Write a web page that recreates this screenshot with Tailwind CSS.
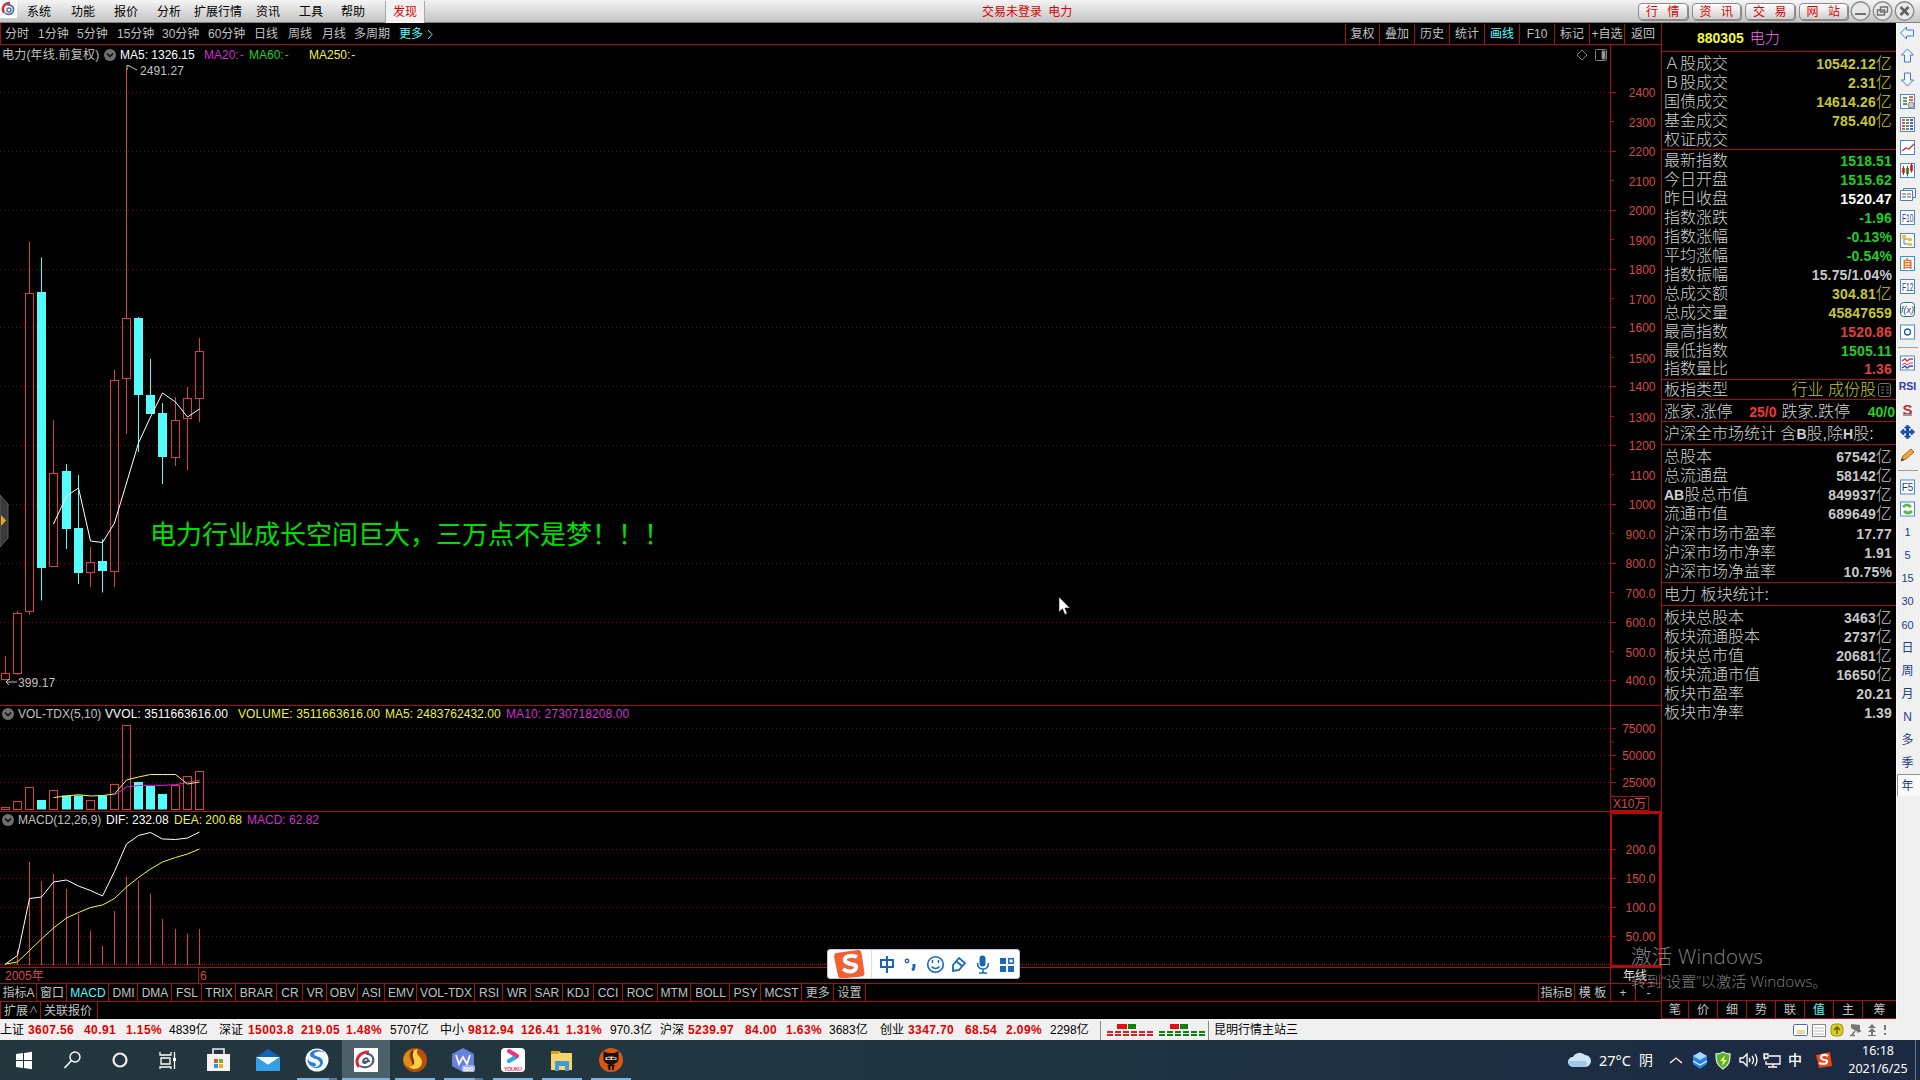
<!DOCTYPE html>
<html lang="zh-CN">
<head>
    <meta charset="UTF-8">
    <meta name="viewport" content="width=device-width, initial-scale=1.0">
    <title>电力 880305</title>
    <script src="https://cdn.jsdelivr.net/npm/@tailwindcss/browser@4"></script>
</head>
<body class="w-[1920px] h-[1080px] overflow-hidden bg-black font-['Liberation_Sans','Noto_Sans_CJK_SC',sans-serif] text-[12px] leading-none text-[#c0c0c0] whitespace-nowrap">
<div class="relative flex flex-col w-[1920px] h-[1080px]">

    <!-- Menu bar -->
    <header class="flex h-[23px] shrink-0 bg-linear-to-b from-[#f4f4f4] to-[#c4c4c4] border-b border-[#808080] text-black">
        <svg class="w-[17px] h-[18px] bg-white" viewBox="0 0 17 18" fill="none">
            <path d="M4 13C1 8 4 3 10 3" stroke="#d8303a" stroke-width="2.4"/>
            <path d="M7 5c5-1 8 3 6 7-2 3-6 3-8 1" stroke="#5a6ea8" stroke-width="1.6"/>
            <circle cx="9" cy="10" r="2" stroke="#5a6ea8" stroke-width="1.4"/>
        </svg>
        <nav class="flex items-center h-[22px] pl-[10px] pt-[1px]">
            <span class="w-[44px]">系统</span>
            <span class="w-[43px]">功能</span>
            <span class="w-[43px]">报价</span>
            <span class="w-[37px]">分析</span>
            <span class="w-[62px]">扩展行情</span>
            <span class="w-[43px]">资讯</span>
            <span class="w-[42px]">工具</span>
            <span class="w-[44px]">帮助</span>
            <span class="flex items-center justify-center w-[40px] h-[22px] bg-[#f2f2f2] border-x border-[#a8a8a8] text-[#e00000]">发现</span>
        </nav>
        <div class="flex items-center pl-[557px] w-[1213px] h-[22px] pt-[1px] text-[#e00000] [word-spacing:3px]">交易未登录 电力</div>
        <div id="siteButtons" class="flex gap-[4px] pt-[3px]"></div>
        <svg class="w-[70px] h-[22px]" viewBox="1849 0 70 22" fill="#e8e8e8" stroke="#8a8a8a" stroke-width="1.4">
            <circle cx="1861.500" cy="11" r="9.3"/><circle cx="1883.500" cy="11" r="9.3"/><circle cx="1905.500" cy="11" r="9.3"/>
            <path d="M1856 14h11" stroke="#707070" stroke-width="2"/>
            <path d="M1881.500 7h7v5h-7zM1878.500 10h7v5h-7z" stroke="#707070"/>
            <path d="M1901.500 7l8 8M1909.500 7l-8 8" stroke="#606060" stroke-width="2.6"/>
        </svg>
    </header>

    <div class="flex h-[996px] shrink-0">
        <!-- Left: charts -->
        <div class="flex flex-col w-[1662px] border-r border-[#a80f14]">
            <!-- Period bar -->
            <div class="flex items-center h-[22px] shrink-0 border-b border-l border-[#a80f14] pl-[4px] pt-[1px]">
                <span class="w-[33px]">分时</span>
                <span class="w-[39px]">1分钟</span>
                <span class="w-[40px]">5分钟</span>
                <span class="w-[45px]">15分钟</span>
                <span class="w-[46px]">30分钟</span>
                <span class="w-[46px]">60分钟</span>
                <span class="w-[34px]">日线</span>
                <span class="w-[34px]">周线</span>
                <span class="w-[32px]">月线</span>
                <span class="w-[45px]">多周期</span>
                <span class="w-[28px] text-[#54fcfc]">更多</span>
                <svg class="w-[8px] h-[11px]" viewBox="0 0 8 11" fill="none" stroke="#54fcfc"><path d="M1 1l4 4.5L1 10"/></svg>
                <div id="chartTools" class="flex ml-auto h-full"></div>
            </div>

            <!-- Price panel -->
            <div class="flex h-[20px] shrink-0">
                <div class="flex items-center w-[1611px] border-r border-[#a80f14] pl-[2px] pb-[1px]">
                    <span class="w-[102px] tracking-[0.2px]">电力(年线.前复权)</span>
                    <svg class="w-[12px] h-[12px] mr-[4px]" viewBox="0 0 12 12"><circle cx="6" cy="6" r="6" fill="#707070"/><path d="M3 4.5l3 3 3-3" fill="none" stroke="#111" stroke-width="1.6"/></svg>
                    <span class="w-[84px] text-white">MA5: 1326.15</span>
                    <span class="w-[45px] text-[#d030d0]">MA20:&#8202;-</span>
                    <span class="w-[60px] text-[#20d020]">MA60:&#8202;-</span>
                    <span class="w-[60px] text-[#f0f040]">MA250:&#8202;-</span>
                    <svg class="ml-auto mr-[2px] w-[32px] h-[14px]" viewBox="0 0 32 14" fill="none" stroke="#808080"><path d="M6 2l5 5-5 5-5-5z"/><rect x="19.500" y="1.500" width="11" height="11" rx="1"/><path d="M26 3h3v8h-3z" fill="#a0a0a0"/></svg>
                </div>
            </div>
            <svg id="priceChart" class="w-[1661px] h-[640px] shrink-0" viewBox="0 65 1661 640"></svg>

            <!-- Volume panel -->
            <div class="flex h-[17px] shrink-0 border-t border-[#a80f14]">
                <div class="flex items-center w-[1611px] border-r border-[#a80f14] pl-[2px]">
                    <svg class="w-[12px] h-[12px] mr-[4px]" viewBox="0 0 12 12"><circle cx="6" cy="6" r="6" fill="#707070"/><path d="M3 4.500l3 3 3-3" fill="none" stroke="#111" stroke-width="1.6"/></svg>
                    <span class="w-[87px]">VOL-TDX(5,10)</span>
                    <span class="w-[133px] text-white tracking-[0.1px]">VVOL: 3511663616.00</span>
                    <span class="w-[147px] text-[#f0f040] tracking-[0.1px]">VOLUME: 3511663616.00</span>
                    <span class="w-[121px] text-[#f0f040] tracking-[0.05px]">MA5: 2483762432.00</span>
                    <span class="text-[#d030d0] tracking-[0.1px]">MA10: 2730718208.00</span>
                </div>
            </div>
            <svg id="volumeChart" class="w-[1661px] h-[89px] shrink-0" viewBox="0 722 1661 89"></svg>

            <!-- MACD panel -->
            <div class="flex h-[17px] shrink-0 border-t border-[#a80f14]">
                <div class="flex items-center w-[1610px] pl-[2px]">
                    <svg class="w-[12px] h-[12px] mr-[4px]" viewBox="0 0 12 12"><circle cx="6" cy="6" r="6" fill="#707070"/><path d="M3 4.500l3 3 3-3" fill="none" stroke="#111" stroke-width="1.6"/></svg>
                    <span class="w-[88px]">MACD(12,26,9)</span>
                    <span class="w-[68px] text-white">DIF: 232.08</span>
                    <span class="w-[73px] text-[#f0f040]">DEA: 200.68</span>
                    <span class="text-[#d030d0]">MACD: 62.82</span>
                </div>
                <div class="w-[51px] border-x-2 border-t-2 border-[#b80808]"></div>
            </div>
            <svg id="macdChart" class="w-[1661px] h-[139px] shrink-0" viewBox="0 828 1661 139"></svg>

            <!-- Date axis -->
            <div class="flex h-[16px] shrink-0 border-t border-[#a80f14] text-[#d84848]">
                <div class="flex items-center w-[198px] pl-[5px]">2005年</div>
                <div class="flex items-center w-[1412px] border-l border-[#a80f14] pl-[1px]">6</div>
                <div class="flex items-center w-[51px] border-l border-[#a80f14] pl-[12px] text-[#e0e0e0]">年线</div>
            </div>
            <div id="indicatorTabs" class="flex h-[17px] shrink-0 border-y border-[#a80f14] box-content"></div>
            <div class="flex h-[18px] shrink-0 border-b border-[#c01018]">
                <span class="flex items-center w-[41px] pl-[3px] border-x border-[#a80f14]">扩展<i class="not-italic text-[9px] ml-[1px]">∧</i></span>
                <span class="flex items-center w-[57px] pl-[3px] border-r border-[#a80f14]">关联报价</span>
            </div>
        </div>

        <!-- Quote panel -->
        <aside class="flex flex-col w-[234px]">
            <div class="flex items-center gap-[6px] h-[29px] shrink-0 border-b border-[#a80f14] pl-[35px] pt-[1px] text-[14px] font-bold text-[#f8f830]">880305 <span class="text-[15px] font-light text-[#f070f0]">电力</span></div>
            <div id="quotes" class="flex flex-col h-[948px]"></div>
            <div id="quoteTabs" class="flex h-[19px] shrink-0 border-y border-[#a80f14]"></div>
        </aside>

        <!-- Shortcut strip -->
        <svg id="strip" class="w-[24px] h-[996px] bg-[#f0f0f0]" viewBox="1896 23 24 996" fill="none"></svg>
    </div>

    <!-- Index ticker -->
    <div class="flex items-center h-[21px] shrink-0 bg-[#f0f0f0] text-black">
        <div id="ticker" class="flex items-center w-[1100px] pt-[1px]"></div>
        <svg class="w-[114px] h-[21px]" viewBox="1100 1019 114 21" id="depth"></svg>
        <span class="w-[578px] pt-[1px]">昆明行情主站三</span>
        <svg class="w-[104px] h-[16px]" viewBox="0 0 104 16" fill="none">
            <rect x="1.500" y="2.500" width="14" height="11" rx="1" fill="#fff" stroke="#4a6ac8"/><path d="M5 9h8M5 11h8" stroke="#d8b020"/>
            <rect x="20.500" y="2.500" width="13" height="12" fill="#fff" stroke="#888"/><path d="M22 6h10M22 9h10M22 12h10" stroke="#bbb"/>
            <rect x="39" y="2" width="12" height="12" rx="4" fill="#d8d020" stroke="#a09818"/><path d="M45 12V5m-3 3l3-3 3 3" stroke="#605800" stroke-width="1.300"/>
            <path d="M59 2l9 1v7l-4-1-5-3z" fill="#777"/><path d="M58 13.500h5M60 13l3-4M65 10l4-1" stroke="#777" stroke-width="1.500"/>
            <path d="M80 2l4 4h-8zM80 6l4 4h-8zM79 10h2v4h-2zM76 13h8v1h-8z" fill="#777"/>
            <path d="M93 3v5M93 11v2" stroke="#777" stroke-width="2"/>
        </svg>
    </div>

    <!-- Windows taskbar -->
    <footer class="flex h-[40px] shrink-0 bg-linear-to-r from-[#24373f] via-[#213541] to-[#1b2942] text-white">
        <svg class="w-[1560px] h-[40px]" viewBox="0 1040 1560 40" fill="none">
            <path d="M16 1054l7-1v7h-7zM24 1053l8-1.200v8.200h-8zM16 1061h7v7l-7-1zM24 1061h8v8.200l-8-1.200z" fill="#fff"/>
            <circle cx="75" cy="1057" r="5" stroke="#fff" stroke-width="1.400"/><path d="M71.500 1060.500l-7 7.500" stroke="#fff" stroke-width="1.600"/>
            <circle cx="120" cy="1060" r="6.500" stroke="#f0f0f0" stroke-width="2.200"/>
            <path d="M160 1052v3h11v-3M161 1058h9v6h-9zM160 1069v-2h11v2M174.500 1052v17" stroke="#fff" stroke-width="1.300"/><rect x="173" y="1058" width="3" height="3" fill="#fff"/>
            <path d="M213 1054v-5h11v5" stroke="#eee" stroke-width="1.600"/><path d="M207 1054h23v17h-23z" fill="#f4f4f4"/>
            <path d="M214 1059h4v4h-4z" fill="#e8502a"/><path d="M219 1059h4v4h-4z" fill="#78b020"/><path d="M214 1064h4v4h-4z" fill="#20a0e8"/><path d="M219 1064h4v4h-4z" fill="#f0b020"/>
            <path d="M256 1057l12-8 12 8v14h-24z" fill="#1464b8"/><path d="M256 1057h24l-12 8z" fill="#f4f8fc"/><path d="M256 1057v14h24v-14l-12 8z" fill="#30a0e8"/>
            <circle cx="317" cy="1060" r="11.500" fill="#f4f8ff"/>
            <path d="M325 1053c-5-5-15-3-15 2 0 4 10 3 10 8 0 3-4 5-8 4 5 3 11 0 11-5 0-6-9-5-9-8 0-2 6-4 11-1z" fill="#2f7fd0"/><path d="M308 1058c0 6 8 3 8 7 0 2-3 2-5 1-3-2-4-5-3-8z" fill="#2f7fd0"/>
            <rect x="342" y="1040" width="48" height="40" fill="#4c606c"/><rect x="354" y="1048" width="24" height="24" fill="#fff"/>
            <path d="M359 1067c-5-7 0-15 10-15" stroke="#d82838" stroke-width="3"/><path d="M366 1054c7-1 9 6 6 10-3 4-9 4-12 2" stroke="#505878" stroke-width="2"/><path d="M363 1062c0-4 5-5 5-2s-5 4-5 2l7-1" stroke="#505878" stroke-width="1.800"/>
            <circle cx="415" cy="1060" r="12" fill="#b8500c"/><path d="M418 1049c-12 2-4 11-4 14s-4 4-7 2c5 7 15 4 15-3 0-6-8-7-4-13z" fill="#ffd040"/><path d="M412 1049c-9 3-11 12-6 17 3 2 7 0 6-3-2-4-5-8 0-14z" fill="#d89018"/><path d="M413 1051c-4 6 2 9 0 13" stroke="#702808" stroke-width="1.800"/>
            <path d="M463 1048l11 6v12l-11 6-11-6v-12z" fill="#6880e0"/><path d="M456 1055l3 9 4-7 4 7 3-9" stroke="#fff" stroke-width="1.800"/><rect x="462" y="1065" width="13" height="7" rx="2" fill="#a0b0f0"/><text x="463" y="1071" font-size="6" font-weight="700" fill="#fff">800</text>
            <rect x="501" y="1048" width="24" height="24" rx="4" fill="#fff"/><path d="M509 1051l8 5-3 2" stroke="#f03080" stroke-width="4" stroke-linejoin="round" stroke-linecap="round"/><path d="M514 1058l-5 3" stroke="#20a8f0" stroke-width="4" stroke-linecap="round"/><text x="504" y="1070.500" font-size="5.500" font-weight="700" textLength="18" fill="#f03070">YOUKU</text>
            <path d="M551 1051h8l2 2h11v17h-21z" fill="#f8d468"/><path d="M551 1051h8v3h-8z" fill="#d8a020"/><path d="M555 1061h14v10h-4v-5h-6v5h-4z" fill="#4098e0"/>
            <circle cx="611" cy="1060" r="12" fill="#d85810"/><path d="M603.500 1051l4 2h7l4-2v8c0 7-15 7-15 0z" fill="#181010"/><path d="M605.500 1057.500q5.500-2 11 0v2.500h-11z" fill="#f0d0b0"/><path d="M607 1058.500h3.500M612 1058.500h3.500" stroke="#181010" stroke-width="1.400"/><path d="M607.500 1065q3.500-2 7 0l-1 5h-5z" fill="#181010"/><path d="M610.500 1066h1.500v4h-1.500z" fill="#d85810"/>
            <g fill="#78b4e4"><path d="M297 1078h40v2h-40zM342 1078h48v2h-48zM395 1078h40v2h-40zM444 1078h39v2h-39zM493 1078h40v2h-40zM542 1078h40v2h-40zM591 1078h40v2h-40z"/></g><path d="M329 1078h8v2h-8zM475 1078h8v2h-8z" fill="#4f7c9e"/>
        </svg>
        <svg class="w-[34px] h-[40px]" viewBox="1560 1040 34 40"><path d="M1573 1067a5 5 0 0 1 0-10 7.500 7.500 0 0 1 12-2 6 6 0 0 1 0 12z" fill="#cfe6f8"/><path d="M1573 1067a5 5 0 0 1-4-6h17a5 5 0 0 1-1 6z" fill="#a0c8ec"/></svg>
        <div class="flex items-center w-[69px] pl-[5px] text-[14.5px] font-['Noto_Sans','Noto_Sans_CJK_SC',sans-serif]">27°C<span class="ml-[8px] text-[14px]">阴</span></div>
        <svg class="w-[122px] h-[40px]" viewBox="1663 1040 122 40" fill="none" stroke="#fff" stroke-width="1.300">
            <path d="M1670 1063l6-5 6 5"/>
            <path d="M1700 1052l7 4v8l-7 5-7-5v-8z" fill="#2880f0" stroke="none"/><path d="M1693 1056l7 4 7-4-7-4z" fill="#a8d8ff" stroke="none"/><path d="M1693 1061l7 4 7-4" stroke="#e0f0ff"/>
            <path d="M1723 1052c3 2 5 2 7 2 0 8-1 11-7 15-6-4-7-7-7-15 2 0 4 0 7-2z" fill="#58b030" stroke="#d8e8d0"/><path d="M1725 1055l-5 6h3l-1 5 5-6h-3z" fill="#fff080" stroke="none"/>
            <path d="M1740 1058h3l4-4v12l-4-4h-3zM1749 1058q2 2 0 4M1752 1056q3 4 0 8M1755 1054q4 6 0 12"/>
            <path d="M1769 1056h11v8h-14v-3M1773 1064v3M1768 1067h9M1764.500 1055v5M1764 1054h4v4h-4z"/>
        </svg>
        <span class="flex items-center w-[28px] pl-[3px] text-[14px] font-medium">中</span>
        <svg class="w-[30px] h-[40px]" viewBox="1813 1040 30 40" fill="none"><path d="M1816 1055l14-3 2 14-13 2z" fill="#e84818"/><path d="M1828 1056c-3-2-8-1-7 2s7 1 6 4-5 2-8 1" stroke="#fff" stroke-width="2.200"/></svg>
        <div class="flex flex-col justify-center gap-[6px] items-center w-[70px] text-[12.5px] font-['Noto_Sans']"><span>16:18</span><span>2021/6/25</span></div>
        <div class="ml-auto w-[5px] border-l border-[#6b7788]"></div>
    </footer>

    <!-- Text note drawn on the chart -->
    <div class="absolute left-[150px] top-[520px] text-[26px] leading-[26px] font-['Noto_Sans_CJK_SC',sans-serif] font-normal text-[#00e000]">电力行业成长空间巨大，三万点不是梦！！！</div>

    <!-- Drawer handle -->
    <svg class="absolute left-0 top-[494px] w-[10px] h-[56px]" viewBox="0 0 10 56"><path d="M0 1l8 9v34l-8 9z" fill="#3a3a3a" stroke="#5a5a5a"/><path d="M1 21l5 5.500-5 5.500z" fill="#e8a820"/></svg>

    <!-- Mouse pointer -->
    <svg class="absolute left-[1058px] top-[596px] w-[13px] h-[20px]" viewBox="0 0 13 20"><path d="M1 1v15l3.500-3.200 2.300 5.700 2.400-1-2.300-5.500h5z" fill="#fff" stroke="#222" stroke-width=".6"/></svg>

    <!-- Input method bar -->
    <div class="absolute left-[827px] top-[949px] flex w-[193px] h-[30px] rounded-[3px] bg-white border border-[#b8c8d8]">
        <svg class="w-[191px] h-[28px]" viewBox="828 950 191 28" fill="none" stroke="#1868b8" stroke-width="2">
            <path d="M836 953l22-3q3 0 3.500 3l3 20q0 3-3 3.500l-20 2q-3 0-3.500-3l-4-19q0-3 2-3.500z" fill="#f06030" stroke="none"/>
            <path d="M857 957c-6-3-14 0-12 4s13 2 11 7-9 4-13 1" stroke="#fff" stroke-width="4"/>
            <path d="M871.500 950v28" stroke="#f0d8d0" stroke-width="1"/>
            <path d="M881 960h12v7h-12zM887 956v17"/>
            <circle cx="907" cy="961" r="1.700" stroke-width="1.400"/><path d="M914 964v3q0 2-2 3" stroke-width="3"/>
            <circle cx="935.500" cy="964.500" r="7.800" stroke-width="1.600"/><path d="M932.500 960v3M938.500 960v3M931.500 966.500q4 4 8 0" stroke-width="1.500"/>
            <path d="M953 965l6-7 6 5-6 7-6 1zM956 961l6 5" stroke-width="1.800"/>
            <rect x="980.500" y="956.500" width="4" height="9" rx="2" fill="#1868b8"/><path d="M977.500 963q0 6 5.500 6t5.500-6M983 969v4M979 973h8" stroke-width="1.500"/>
            <path d="M1000 958h6v6h-6zM1000 966h6v6h-6zM1008 966h6v6h-6z" fill="#1868b8" stroke="none"/><path d="M1008.800 958.800h4.500v4.500h-4.500z" stroke-width="1.500"/>
        </svg>
    </div>

    <!-- Activation watermark -->
    <div class="absolute left-[1631px] top-[945px] flex flex-col text-[#949494]/90 font-['Open_Sans','Noto_Sans_CJK_SC',sans-serif] font-light">
        <span class="text-[20.500px] leading-[23px] tracking-[0.2px]">激活 Windows</span>
        <span class="text-[15.200px] leading-[26px]">转到“设置”以激活 Windows。</span>
    </div>
</div>

<script>
    const $ = id => document.getElementById(id);
    const RED = '#d84040', CYAN = '#54fcfc', LINE = '#a80f14', GRID = '#66100f';
    const X = [5.5, 17.5, 29.5, 41.5, 53.5, 66.5, 78.5, 90.5, 102.5, 114.5, 126.5, 138.5, 150.5, 162.5, 175.5, 187.5, 199.5];

    // high, body top, body bottom, low, falling year
    const candles = [
        [656, 673.5, 679.5, 680, 0], [611, 613.5, 673.5, 675, 0], [242, 293.5, 611.5, 615, 0], [257.5, 292, 568, 600.5, 1],
        [420, 473.5, 566.5, 567, 0], [464, 471, 529, 549, 1], [475, 528, 573, 584, 1], [547, 562.5, 572.5, 587, 0],
        [539, 561, 571, 592.5, 1], [370, 380.5, 571.5, 587, 0], [68, 318.5, 378.5, 434, 0], [317, 318, 395, 452, 1],
        [359, 395, 414, 414, 1], [403, 413, 457, 484, 1], [397, 420.5, 457.5, 466, 0], [387, 398.5, 418.5, 470, 0], [338, 351.5, 398.5, 422, 0]
    ];
    const ma5 = [524, 496, 488, 541, 542.5, 523, 483, 443, 417, 393, 402, 417, 409];
    const volumes = [807.5, 801.5, 787.5, 800, 790.5, 795.5, 795.5, 800.5, 795.5, 784.5, 725.5, 782, 786, 794, 785.5, 776.5, 771.5];
    const volMa5 = [797.5, 796, 794.7, 796, 795.5, 794, 780, 777, 774.5, 774.5, 774.5, 784, 782];
    const volMa10 = [795, 787, 785.5, 785.3, 785.3, 784.7, 782.5, 780];
    const dif = [964, 955.5, 898.5, 897, 882, 880, 886, 890.5, 896, 871.5, 844, 835.5, 832.5, 839, 839.5, 838, 832];
    const dea = [964, 962, 950.5, 939, 928, 918, 912.5, 907.5, 905, 898.5, 887, 877.5, 869, 862, 857.5, 854, 849];
    const macd = [963, 950, 862, 881, 874, 889, 914, 930.5, 946, 911, 877, 881, 893.5, 919, 929, 933.5, 929];

    const grid = y => `<path d="M0 ${y}H1610" stroke="${GRID}" stroke-dasharray="1 3" shape-rendering="crispEdges"/>`;
    const line = (ys, color) => `<polyline points="${ys.map((y, i) => X[X.length - ys.length + i] + ',' + y).join(' ')}" fill="none" stroke="${color}"/>`;
    const box = (x, top, bottom, down) => down
        ? `<rect x="${x - 4.5}" y="${top}" width="9" height="${bottom - top}" fill="${CYAN}"/>`
        : `<rect x="${x - 4}" y="${top}" width="8" height="${bottom - top}" fill="none" stroke="${RED}"/>`;
    const tick = (y, w) => `<path d="M1611 ${y}h${w}" stroke="${LINE}"/>`;
    const label = (y, t) => `<text x="1655.500" y="${y + 4.5}" text-anchor="end" font-size="12" fill="#d84848">${t}</text>`;
    const axis = (a, b) => `<path d="M1610.5 ${a}V${b}" stroke="${LINE}"/>`;

    // Price chart
    let s = axis(65, 705);
    for (let p = 2400, i = 0; p >= 400; p -= 100, i++) {
        const y = Math.round(93 + i * 29.42) - 0.5;
        if (i % 2 === 0) s += grid(y);
        s += tick(y, i % 2 ? 3 : 5) + label(y + (i % 2 ? 1 : 0), p < 1000 ? p.toFixed(1) : p);
    }
    candles.forEach(([h, t, b, l, down], i) => {
        s += `<path d="M${X[i]} ${h}V${t}M${X[i]} ${b}V${l}" stroke="${down ? CYAN : RED}"/>` + box(X[i], t, b, down);
    });
    s += line(ma5, '#fff');
    s += `<path d="M127 70v-5h3M127 65l10 5M6 682h11M6 682l3-3M6 682l3 3" stroke="#c0c0c0" fill="none"/>`;
    s += `<text x="140" y="75" font-size="12" letter-spacing=".1" fill="#c0c0c0">2491.27</text><text x="18" y="686.500" font-size="12" letter-spacing=".1" fill="#c0c0c0">399.17</text>`;
    $('priceChart').innerHTML = s;

    // Volume chart
    s = axis(722, 811);
    [[728.5, 75000], [755.5, 50000], [782.5, 25000]].forEach(([y, t]) => { s += grid(y) + tick(y, 5) + tick(y + 13.5, 3) + label(y, t); });
    volumes.forEach((t, i) => { s += box(X[i], t, 809.5, candles[i][4]); });
    s += line(volMa10, '#e020e0') + line(volMa5, '#f8f840');
    s += `<rect x="1610.5" y="796.500" width="38" height="14" fill="#000" stroke="${LINE}"/><text x="1613" y="808" font-size="12" fill="#d84848">X10万</text>`;
    $('volumeChart').innerHTML = s;

    // MACD chart
    s = '';
    [[849.5, '200.0'], [878.5, '150.0'], [907.5, '100.0'], [936.5, '50.00']].forEach(([y, t]) => { s += grid(y) + tick(y, 5) + label(y, t); });
    s += `<path d="M0 964.500H1610" stroke="#b01818" stroke-dasharray="1 1"/>`;
    macd.forEach((t, i) => { s += `<path d="M${X[i]} ${t}V965" stroke="${RED}"/>`; });
    s += line(dif, '#fff') + line(dea, '#f8f840') + `<path d="M1611 828V966H1660V828" fill="none" stroke="#b80808" stroke-width="2"/>`;
    $('macdChart').innerHTML = s;

    // Toolbars
    $('siteButtons').innerHTML = ['行情', '资讯', '交易', '网站'].map(t =>
        `<span class="flex items-center justify-between w-[49.500px] h-[17px] px-[7px] rounded-[4px] border border-[#8c8c8c] bg-linear-to-b from-white to-[#d0d0d0] shadow-[1px_1px_0_#888] text-[#e00000]"><i class="not-italic">${t[0]}</i><i class="not-italic">${t[1]}</i></span>`).join('');
    $('chartTools').innerHTML = [['复权', 34], ['叠加', 35], ['历史', 35], ['统计', 35], ['画线', 35], ['F10', 35], ['标记', 35], ['+自选', 35], ['返回', 37]].map(([t, w]) =>
        `<span class="flex items-center justify-center border-l border-[#a80f14] ${t === '画线' ? 'text-[#54fcfc]' : ''}" style="width:${w}px">${t}</span>`).join('');

    const tabs = [['指标A', 37], ['窗口', 30], ['MACD', 42], ['DMI', 29], ['DMA', 34], ['FSL', 30], ['TRIX', 34], ['BRAR', 41], ['CR', 26], ['VR', 24], ['OBV', 31], ['ASI', 27], ['EMV', 32], ['VOL-TDX', 58], ['RSI', 28], ['WR', 28], ['SAR', 31.5], ['KDJ', 31], ['CCI', 29], ['ROC', 35], ['MTM', 33.5], ['BOLL', 39], ['PSY', 31], ['MCST', 41], ['更多', 31.5], ['设置', 32], ['', 673], ['指标B', 36], ['模 板', 36], ['+', 25], ['-', 26]];
    $('indicatorTabs').innerHTML = tabs.map(([t, w]) =>
        `<span class="flex items-center justify-center shrink-0 pl-[1px] border-r border-[#a80f14] ${t === 'MACD' ? 'text-[#54fcfc]' : ''}" style="width:${w}px">${t}</span>`).join('');
    $('quoteTabs').innerHTML = [['笔', 27], ['价', 29], ['细', 29], ['势', 29], ['联', 29], ['值', 29], ['主', 29], ['筹', 33]].map(([t, w]) =>
        `<span class="flex items-center justify-center pt-[1px] border-r border-[#a80f14] last:border-r-0 ${t === '值' ? 'text-[#54fcfc]' : ''}" style="width:${w}px">${t}</span>`).join('');

    // Quote rows: label, value, value colour. Arrays are grouped between red rules
    const G = 'text-[#20d020]', Y = 'text-[#c8c828]', W = 'text-[#ffffff]', S = 'text-[#c8c8c8]', R = 'text-[#e04040]';
    const groups = [
        ['h-[98px] pt-[2px]', [['Ａ股成交', '10542.12亿', Y], ['Ｂ股成交', '2.31亿', Y], ['国债成交', '14614.26亿', Y], ['基金成交', '785.40亿', Y], ['权证成交', '', Y]]],
        ['h-[230px] pt-[1.5px]', [['最新指数', '1518.51', G], ['今日开盘', '1515.62', G], ['昨日收盘', '1520.47', W], ['指数涨跌', '-1.96', G], ['指数涨幅', '-0.13%', G], ['平均涨幅', '-0.54%', G], ['指数振幅', '15.75/1.04%', S], ['总成交额', '304.81亿', Y], ['总成交量', '45847659', Y], ['最高指数', '1520.86', R], ['最低指数', '1505.11', G], ['指数量比', '1.36', R]]],
        ['h-[20px] pt-[1px]', [['板指类型', '', Y]]],
        ['h-[22px] pt-[2px]', [['涨家.涨停', '', S]]],
        ['h-[23px] pt-[2px]', [['沪深全市场统计 含<b class="font-bold text-[14px]">B</b>股,除<b class="font-bold text-[14px]">H</b>股:', '', S]]],
        ['h-[138px] pt-[2px]', [['总股本', '67542亿', S], ['总流通盘', '58142亿', S], ['<b class="font-bold text-[14px]">AB</b>股总市值', '849937亿', S], ['流通市值', '689649亿', S], ['沪深市场市盈率', '17.77', S], ['沪深市场市净率', '1.91', S], ['沪深市场净益率', '10.75%', S]]],
        ['h-[23px] pt-[2px]', [['电力 板块统计:', '', S]]],
        ['h-[120px] pt-[2px] border-b-0', [['板块总股本', '3463亿', S], ['板块流通股本', '2737亿', S], ['板块总市值', '20681亿', S], ['板块流通市值', '16650亿', S], ['板块市盈率', '20.21', S], ['板块市净率', '1.39', S]]]
    ];
    const cell = v => v.replace(/[亿]/g, '<i class="not-italic font-light text-[16px]">$&</i>');
    const typeIcon = '<svg class="inline-block w-[13px] h-[14px] ml-[2px]" viewBox="0 0 13 14" fill="none" stroke="#777"><rect x=".5" y=".5" width="12" height="13" rx="2"/><path d="M3 4h3M8 4h3M3 7h3M8 7h3M3 10h3M8 10h3"/></svg>';
    $('quotes').innerHTML = groups.map(([cls, rows]) => `<div class="flex flex-col shrink-0 border-b border-[#a80f14] ${cls}">` + rows.map(([k, v, c]) => {
        // 沪深市场 ratios sit one pixel below the row pitch
        const gap = k === '沪深市场市盈率' ? 'mt-[1.5px]' : '';
        if (k === '涨家.涨停') return `<div class="flex items-center h-[19px] pl-[2px] text-[16px] font-light text-[#d0d0d0]">涨家.涨停<b class="ml-auto text-[14px] font-bold text-[#f03838]">25/0</b><span class="ml-[5px]">跌家.跌停</span><b class="w-[46px] pr-[1px] text-right text-[14px] font-bold text-[#20d020]">40/0</b></div>`;
        if (k === '板指类型') return `<div class="flex items-center justify-between h-[19px] pl-[2px] pr-[5px] text-[16px] font-light text-[#d0d0d0]"><span>${k}</span><span class="flex items-center text-[#c8c828]">行业 成份股${typeIcon}</span></div>`;
        return `<div class="flex items-center justify-between h-[19px] pl-[2px] pr-[4px] text-[16px] font-light text-[#d0d0d0] ${gap}"><span>${k}</span><span class="flex items-center text-[14px] font-bold tracking-[0.15px] ${c}">${cell(v)}</span></div>`;
    }).join('') + '</div>').join('');

    // Shortcut strip
    const frame = y => `<rect x="1900.500" y="${y - 7}" width="14" height="14" fill="#fff" stroke="#4a88d0"/>`;
    const word = (y, t, f = 12, c = '#1c3c88', w = 400) => `<text x="1907.500" y="${y + f * 0.38}" text-anchor="middle" font-size="${f}" font-weight="${w}" fill="${c}">${t}</text>`;
    const arrow = (y, r) => `<path transform="translate(1907.500 ${y}) rotate(${r})" d="M-7 0l6-6v3h7v6h-7v3z" fill="#eef6ff" stroke="#4a78c8"/>`;
    const boxWord = (y, t) => `<text x="1902" y="${y + 4}" textLength="11.500" lengthAdjust="spacingAndGlyphs" font-size="10.500" fill="#1c3c88">${t}</text>`;
    s = '<path d="M1896.500 23V1019" stroke="#fafafa"/>' + arrow(33, 0) + arrow(56, 90) + arrow(79, -90);
    s += frame(101.5) + '<path d="M1903 98h4M1903 101h4M1903 104h4" stroke="#208030" stroke-width="1.500"/><path d="M1909 97h4M1909 100h4" stroke="#d03030" stroke-width="1.500"/><circle cx="1911" cy="105" r="3" fill="#ccc" stroke="#888"/>';
    s += frame(124.5) + [['#d02020', 1902], ['#208020', 1906], ['#2020c0', 1910]].map(([c, x]) => `<path d="M${x} 120h3M${x} 123h3M${x} 126h3M${x} 129h3" stroke="${c}" stroke-width="1.500"/>`).join('');
    s += frame(147.5) + '<path d="M1902 151l4-3 3 1 5-5" stroke="#c83030" stroke-width="1.300"/>';
    s += frame(170.5) + '<path d="M1903.500 168v5M1911.500 165v6" stroke="#e01010" stroke-width="2.600"/><path d="M1907.500 168v6" stroke="#108020" stroke-width="2.600"/><path d="M1903.500 166v9M1911.500 163.500v9" stroke="#e01010"/><path d="M1907.500 166v10.500" stroke="#108020"/>';
    s += '<path d="M1903.500 188.500h12v9h-12z" stroke="#4a78b8"/><path d="M1900.500 190.500h12v10h-12z" fill="#fff" stroke="#4a78b8"/><path d="M1902 194h4M1907 194h4M1902 197h4M1907 197h4" stroke="#555"/>';
    s += frame(217.5) + boxWord(217.5, 'F10');
    s += frame(240.5) + '<path d="M1904 237v7h4M1904 239h4" stroke="#777"/><path d="M1902 235h4v4h-4zM1908 238h4v3h-4zM1908 243h4v3h-4z" fill="#f0c040"/>';
    s += '<rect x="1900.500" y="256.500" width="14" height="14" fill="#fff" stroke="#18a0e0"/>' + word(263.5, '自', 11, '#f07020', 700);
    s += frame(286.5) + boxWord(286.5, 'F12');
    s += '<rect x="1900.500" y="302.500" width="14" height="14" rx="3" fill="#fff" stroke="#207080"/>' + `<text x="1907.500" y="313" font-size="9" font-style="italic" text-anchor="middle" fill="#1c3c88">f(x)</text>`;
    s += frame(332) + '<circle cx="1907.500" cy="332" r="3" stroke="#2060a8" stroke-width="1.300"/><path d="M1898 347.500h20M1898 470.500h20" stroke="#a0a0a0"/>';
    s += frame(363) + '<path d="M1902 361l3-2 2 2 3-2 3 0" stroke="#d03030" stroke-width="1.400"/><path d="M1902 365l3-2 2 2 3-2 3 0" stroke="#d03030"/><path d="M1902 368l3-2 2 2 3-2 3 0" stroke="#4040c0" stroke-width="1.400"/>';
    s += word(386, 'RSI', 10.500, '#3838b8', 700) + word(409, 'S', 15, '#b83030', 700) + '<path d="M1903 415h9" stroke="#999" stroke-width="2"/>';
    s += '<path d="M1907.500 425l3 3h-2v3h3v-2l3 3-3 3v-2h-3v3h2l-3 3-3-3h2v-3h-3v2l-3-3 3-3v2h3v-3h-2z" fill="#1850a8" stroke="#1850a8"/>';
    s += '<path d="M1901 461l2-5 8-7 3 3-8 7z" fill="#f0a838" stroke="#a06820"/><path d="M1901 461l1-3 2 2z" fill="#333"/>';
    s += frame(487) + word(487, 'F5', 10) + frame(509) + '<path d="M1903 507q4-4 8 0M1912 511q-4 4-8 0" stroke="#58b848" stroke-width="3"/>';
    s += '<rect x="1897" y="774" width="23" height="22" fill="#fafafa"/><path d="M1897.500 796V774.500H1920" stroke="#909090"/>';
    ['1', '5', '15', '30', '60', '日', '周', '月', 'N', '多', '季', '年'].forEach((t, i) => { s += word(532 + i * 23.08, t, i < 5 ? 11 : 12); });
    $('strip').innerHTML = s;

    // Ticker: name, index, change, percent, turnover with column widths
    const ticker = [
        ['上证', 28, '3607.56', 56, '40.91', 42, '1.15%', 43, '4839亿', 50], ['深证', 29, '15003.8', 53, '219.05', 45, '1.48%', 44, '5707亿', 50],
        ['中小', 28, '9812.94', 53, '126.41', 45, '1.31%', 44, '970.3亿', 50], ['沪深', 28, '5239.97', 57, '84.00', 41, '1.63%', 43, '3683亿', 51],
        ['创业', 28, '3347.70', 57, '68.54', 41, '2.09%', 44, '2298亿', 40]
    ];
    $('ticker').innerHTML = ticker.map(r => [0, 2, 4, 6, 8].map(i =>
        `<span class="shrink-0 ${i > 0 && i < 8 ? 'font-bold text-[#e00000] tracking-[0.4px]' : ''}" style="width:${r[i + 1]}px">${r[i]}</span>`).join('')).join('');

    s = '<path d="M1100.500 1021V1040M1208.500 1021V1040" stroke="#888"/><path d="M1117 1024h10v5h-10zM1170 1024h9v5h-9z" fill="#e01010"/><path d="M1128 1024h8v5h-8zM1180 1024h8v5h-8z" fill="#108010"/>';
    for (let i = 0; i < 6; i++) {
        s += `<path d="M${1107 + i * 8} 1031h6v2h-6zM${1107 + i * 8} 1034h6v2h-6z" fill="#e02020"/><path d="M${1159 + i * 8} 1031h6v2h-6zM${1159 + i * 8} 1034h6v2h-6z" fill="#108010"/>`;
    }
    $('depth').innerHTML = s;
</script>
</body>
</html>
